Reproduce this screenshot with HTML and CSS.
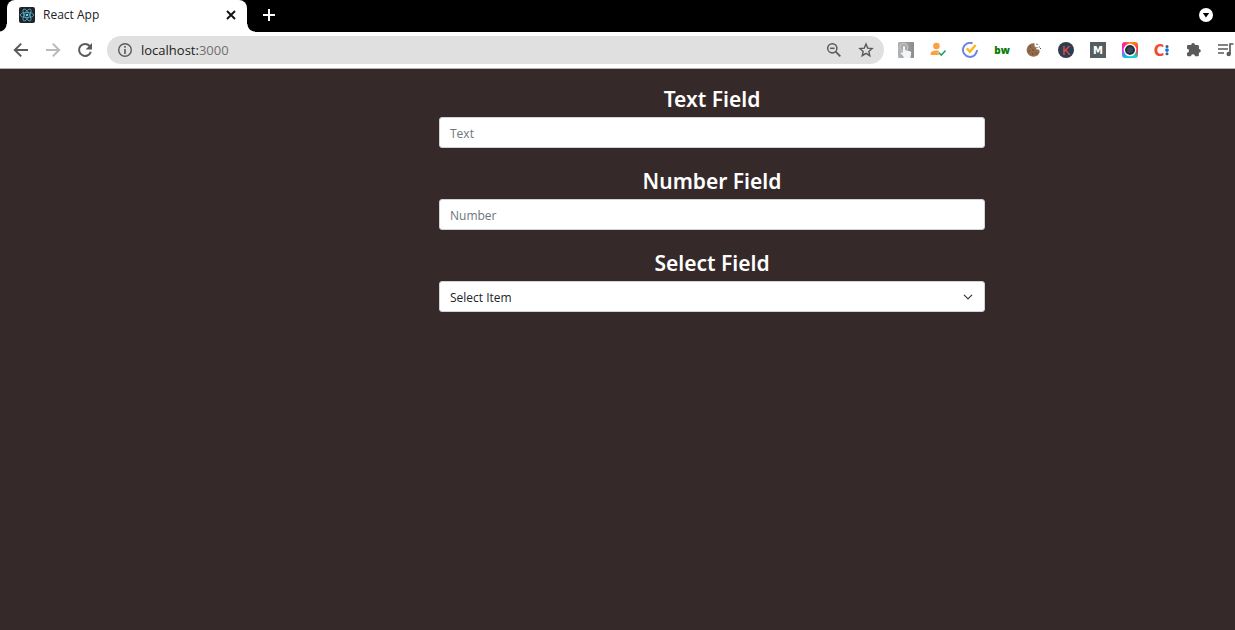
FILE: index.html
```html
<!DOCTYPE html>
<html lang="en">
<head>
<meta charset="utf-8">
<meta name="viewport" content="width=device-width, initial-scale=1">
<title>React App</title>
<link rel="stylesheet" href="styles.css">
</head>
<body>
<header class="browser">
  <div class="tabs">
    <div class="tab">
      <svg class="tab-icon" width="16" height="16" viewBox="0 0 16 16" aria-hidden="true">
        <rect width="16" height="16" rx="2" fill="#20232a"/>
        <g fill="none" stroke="#53b5ce" stroke-width=".8">
          <ellipse cx="8" cy="8" rx="6.7" ry="2.6"/>
          <ellipse cx="8" cy="8" rx="6.7" ry="2.6" transform="rotate(60 8 8)"/>
          <ellipse cx="8" cy="8" rx="6.7" ry="2.6" transform="rotate(120 8 8)"/>
        </g>
        <circle cx="8" cy="8" r="1.3" fill="#61dafb"/>
      </svg>
      <span class="tab-title">React App</span>
      <button class="icon-button tab-close" aria-label="Close tab">
        <svg width="16" height="16" viewBox="0 0 16 16"><path d="M4 4l8 8M12 4l-8 8" stroke="#111" stroke-width="1.9"/></svg>
      </button>
    </div>
    <button class="icon-button new-tab" aria-label="New tab">
      <svg width="16" height="16" viewBox="0 0 16 16"><path d="M8 2v12M2 8h12" stroke="#fff" stroke-width="2"/></svg>
    </button>
    <button class="icon-button tab-search" aria-label="Search tabs">
      <svg width="16" height="16" viewBox="0 0 16 16"><circle cx="8" cy="8" r="7" fill="#fff"/><path d="M4.8 6h6.4L8 10.4z" fill="#000"/></svg>
    </button>
  </div>
  <div class="toolbar">
    <nav class="navigation" aria-label="History">
      <button class="icon-button" aria-label="Back"><svg width="16" height="16" viewBox="0 0 16 16"><path d="M15 8H2.4M8.2 1.6L1.8 8l6.4 6.4" fill="none" stroke="#5a5a5a" stroke-width="2"/></svg></button>
      <button class="icon-button" aria-label="Forward"><svg width="16" height="16" viewBox="0 0 16 16"><path d="M1 8h12.6M7.8 1.6L14.2 8l-6.4 6.4" fill="none" stroke="#bababa" stroke-width="2"/></svg></button>
      <button class="icon-button" aria-label="Reload"><svg width="16" height="16" viewBox="0 0 16 16"><path d="M13.8 9.7A6 6 0 1 1 12.6 4" fill="none" stroke="#5a5a5a" stroke-width="2"/><path d="M15 1v6.4H8.6z" fill="#5a5a5a"/></svg></button>
    </nav>
    <div class="address">
      <svg width="16" height="16" viewBox="0 0 16 16" aria-hidden="true"><circle cx="8" cy="8" r="6.3" fill="none" stroke="#5a5a5a" stroke-width="1.4"/><path d="M8 7v5M8 4v1.7" stroke="#5a5a5a" stroke-width="1.6"/></svg>
      <span class="url">localhost:<span class="port">3000</span></span>
      <button class="icon-button" aria-label="Zoom"><svg width="16" height="16" viewBox="0 0 16 16"><g fill="none" stroke="#5a5a5a" stroke-width="1.5"><circle cx="6.3" cy="6.3" r="4.6"/><path d="M4 6.3h4.6"/><path d="M9.7 9.7l4.6 4.6" stroke-width="1.8"/></g></svg></button>
      <button class="icon-button" aria-label="Bookmark"><svg width="16" height="16" viewBox="0 0 16 16"><path d="M8 2.1l1.7 4 4.4.4-3.3 2.9 1 4.3L8 11.4l-3.8 2.3 1-4.3-3.3-2.9 4.4-.4z" fill="none" stroke="#5a5a5a" stroke-width="1.4"/></svg></button>
    </div>
    <div class="extensions">
      <button class="icon-button" aria-label="Click recorder"><svg width="16" height="16" viewBox="0 0 16 16"><defs><linearGradient id="gray" x1="0" x2="1"><stop stop-color="#b5b5b5"/><stop offset="1" stop-color="#8b8b8b"/></linearGradient></defs><rect width="16" height="16" rx="1" fill="url(#gray)"/><circle cx="6" cy="5.4" r="4" fill="#aaa" stroke="#cacaca"/><path d="M5 5.2q0-1.2 1-1.2t1 1.2v3l5 1.1q1.4.3 1.2 1.8L12.5 15v1h-7v-1.5L2.5 11q.6-1.4 2.5-.2z" fill="#f1f6fb"/></svg></button>
      <button class="icon-button" aria-label="Contact checker"><svg width="16" height="16" viewBox="0 0 16 16"><circle cx="6.4" cy="4" r="3.3" fill="#ff9f43"/><path d="M.6 13v-1.2C.6 9.4 3.6 8.4 6.4 8.4c1.1 0 2 .1 2.9.5L7.4 10.9 9.4 13z" fill="#ff9f43"/><path d="M8.6 10.5l2.7 2.6 4.2-4.5" fill="none" stroke="#25a15b" stroke-width="1.5"/></svg></button>
      <button class="icon-button" aria-label="Tasks"><svg width="16" height="16" viewBox="0 0 16 16"><path d="M10.6 1.4A7 7 0 1 0 15 8" fill="none" stroke="#6b83e8" stroke-width="2"/><path d="M4.8 6.4l3.1 3.4 5.7-6.8" fill="none" stroke="#ffb718" stroke-width="2.4"/></svg></button>
      <button class="icon-button" aria-label="bw"><svg width="16" height="16" viewBox="0 0 16 16"><text x="8" y="12" text-anchor="middle" class="logo-bw">bw</text></svg></button>
      <button class="icon-button" aria-label="Cookies"><svg width="16" height="16" viewBox="0 0 16 16"><path d="M8.7 1.4a6.7 6.7 0 1 0 4.9 9l-.2-2.6-2.6-.4-1.1-2.2-1.3-1.3z" fill="#946b4a"/><g fill="#5f422e"><circle cx="4.5" cy="5" r=".7"/><circle cx="7" cy="8" r=".8"/><circle cx="3.3" cy="9" r=".7"/><circle cx="6.5" cy="12" r=".7"/><circle cx="10.3" cy="11" r=".7"/></g><path d="M10.4 1.8h1.2v1.2h-1.2zM12.8 4.5h1v1h-1zM10.5 5h1v1h-1zM14 6h1v1h-1z" fill="#604635"/></svg></button>
      <button class="icon-button" aria-label="K"><svg width="16" height="16" viewBox="0 0 16 16"><circle cx="8" cy="8" r="8" fill="#2d3e50"/><text x="8" y="12.5" text-anchor="middle" class="logo-k">K</text></svg></button>
      <button class="icon-button" aria-label="M"><svg width="16" height="16" viewBox="0 0 16 16"><rect width="16" height="16" fill="#555f61"/><text x="8" y="11.5" text-anchor="middle" class="logo-m">M</text></svg></button>
      <button class="icon-button" aria-label="Screen capture"><span class="capture"><svg width="16" height="16" viewBox="0 0 16 16"><circle cx="8" cy="8" r="5.7" fill="#333f4b" stroke="#fff" stroke-width="1.3"/><circle cx="8" cy="8" r="3.7" fill="#34495a" stroke="#1c2530"/></svg></span></button>
      <button class="icon-button" aria-label="C"><svg class="logo" width="16" height="16" viewBox="0 0 16 16"><text x="5" y="14" text-anchor="middle" class="logo-c">C</text><circle cx="13" cy="4.4" r="1.5" fill="#4a5969"/><circle cx="13" cy="8.1" r="1.9" fill="#087be8"/><circle cx="13" cy="11.8" r="1.5" fill="#4a5969"/></svg></button>
      <button class="icon-button" aria-label="Extensions"><svg width="16" height="16" viewBox="0 0 16 16"><path d="M5.2 3a1.9 1.9 0 0 1 3.8 0h2.7q1.2 0 1.2 1.2v2.7a1.9 1.9 0 0 1 0 3.8v2.3q0 1.2-1.2 1.2H9a2 2 0 0 0-4 0H2.2q-1.2 0-1.2-1.2V10.7a2 2 0 0 0 0-4V4.2q0-1.2 1.2-1.2z" fill="#5a5a5a"/></svg></button>
      <button class="icon-button playlist" aria-label="Media"><svg width="16" height="16" viewBox="0 0 16 16"><path d="M0 3h10M0 7h10M0 11h6M12 12V2h3.5" fill="none" stroke="#5a5a5a" stroke-width="1.7"/><circle cx="10.7" cy="12" r="2.2" fill="#5a5a5a"/></svg></button>
    </div>
  </div>
</header>
<main class="page">
  <form class="form">
    <div class="field">
      <label for="text">Text Field</label>
      <input class="control" id="text" type="text" placeholder="Text">
    </div>
    <div class="field">
      <label for="number">Number Field</label>
      <input class="control" id="number" type="number" placeholder="Number">
    </div>
    <div class="field">
      <label for="select">Select Field</label>
      <div class="select-wrap">
        <select class="control" id="select"><option>Select Item</option></select>
        <svg class="chevron" width="10" height="10" viewBox="0 0 16 16" aria-hidden="true"><path d="M2 5l6 6 6-6" fill="none" stroke="#343a40" stroke-width="2" stroke-linecap="round" stroke-linejoin="round"/></svg>
      </div>
    </div>
  </form>
</main>
</body>
</html>
```
FILE: styles.css
```css
* {
  box-sizing: border-box;
}

body {
  display: flex;
  flex-direction: column;
  min-height: 100vh;
  margin: 0;
  overflow-x: hidden;
  background: #352929;
  font-family: "Noto Sans", "Open Sans", sans-serif;
}

svg {
  display: block;
  flex: none;
}

.logo {
  overflow: visible;
}

.icon-button {
  display: flex;
  align-items: center;
  justify-content: center;
  padding: 0;
  border: 0;
  background: transparent;
}

.tabs {
  display: flex;
  align-items: stretch;
  height: 32px;
  padding-right: 21px;
  background: #000;
}

.tab {
  position: relative;
  display: flex;
  align-items: center;
  width: 240px;
  margin-left: 7px;
  padding: 0 8px 2px 12px;
  border-radius: 8px 8px 0 0;
  background: #fff;
}

.tab::before,
.tab::after {
  position: absolute;
  bottom: 0;
  width: 8px;
  height: 8px;
  content: "";
}

.tab::before {
  right: 100%;
  background: radial-gradient(circle at 0 0, transparent 7px, #fff 8px);
}

.tab::after {
  left: 100%;
  background: radial-gradient(circle at 100% 0, transparent 7px, #fff 8px);
}

.tab-title {
  flex: 1;
  margin-left: 8px;
  color: #222;
  font-family: "Open Sans", sans-serif;
  font-size: 12px;
  line-height: 16px;
}

.new-tab {
  width: 28px;
  margin-left: 8px;
  padding-bottom: 2px;
}

.tab-search {
  margin-left: auto;
  padding-bottom: 2px;
}

.toolbar {
  display: flex;
  align-items: center;
  height: 37px;
  border-bottom: 1px solid #b5b1b1;
  background: #fff;
}

.navigation {
  display: flex;
  gap: 16px;
  padding: 0 14px 0 13px;
}

.address {
  display: flex;
  flex: 1;
  align-items: center;
  gap: 16px;
  height: 28px;
  padding: 0 10px;
  border-radius: 14px;
  background: #e0e0e0;
}

.url {
  flex: 1;
  margin-left: -8px;
  color: #222;
  font-family: "Open Sans", sans-serif;
  font-size: 13px;
  line-height: 20px;
}

.port {
  color: #707070;
}

.extensions {
  display: flex;
  padding-left: 6px;
}

.extensions .icon-button {
  width: 32px;
}

.extensions .playlist {
  justify-content: flex-end;
  width: 25px;
  padding-right: 1px;
}

.capture {
  border-radius: 3px;
  background: conic-gradient(#f90, #ff2b50 25%, #11d9d0 40%, #0cbce8 60%, #e52bea 75%, #ff2196 88%, #f90);
}

.logo-bw {
  fill: #087c08;
  font: 800 10px "Open Sans", sans-serif;
}

.logo-k {
  fill: #e64c4c;
  font: 13px Roboto, sans-serif;
}

.logo-m {
  fill: #fff;
  font: bold 10px "DejaVu Sans", sans-serif;
}

.logo-c {
  fill: #f04b2c;
  font: bold 16px "Liberation Sans Narrow", "DejaVu Sans Condensed", sans-serif;
}

.page {
  display: grid;
  flex: 1;
  grid-template-columns: 439fr 546fr 250fr;
  padding-top: 15px;
}

.form {
  display: flex;
  grid-column: 2;
  flex-direction: column;
  gap: 18px;
}

.field {
  display: flex;
  flex-direction: column;
  gap: 2px;
}

.field label {
  color: #fff;
  font-size: 21px;
  font-weight: 600;
  line-height: 31px;
  text-align: center;
}

.control {
  display: block;
  width: 100%;
  height: 31px;
  padding: 6px 10px 4px;
  border: 1px solid #ced4da;
  border-radius: 3px;
  outline: 0;
  background: #fff;
  color: #212529;
  font-family: "Open Sans", sans-serif;
  font-size: 12px;
  line-height: 19px;
  appearance: none;
}

.control::placeholder {
  color: #6c757d;
  opacity: 1;
}

.select-wrap {
  position: relative;
}

.chevron {
  position: absolute;
  top: 11px;
  right: 12px;
  pointer-events: none;
}
```
